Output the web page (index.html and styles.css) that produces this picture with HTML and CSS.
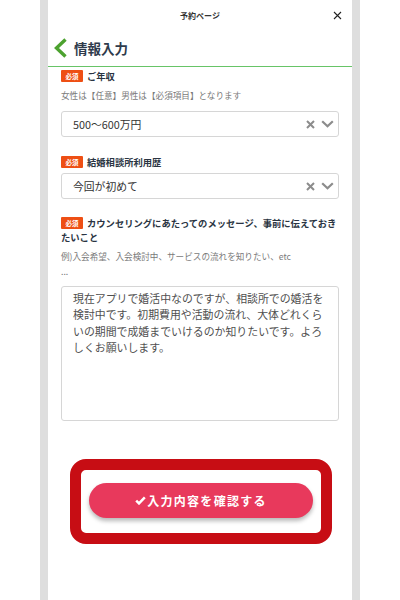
FILE: index.html
```html
<!DOCTYPE html>
<html lang="ja">
<head>
<meta charset="utf-8">
<title>予約ページ</title>
<link rel="stylesheet" href="styles.css">
</head>
<body>
<div class="frame">
  <div class="panel">
    <header class="topbar">
      <span></span>
      <span class="topbar-title">予約ページ</span>
      <span class="close">
        <svg width="9" height="9" viewBox="0 0 9 9"><path d="M1 1L8 8M8 1L1 8" stroke="#222" stroke-width="1.1" fill="none"/></svg>
      </span>
    </header>
    <div class="titlebar">
      <svg class="back" width="14" height="20" viewBox="0 0 14 20"><path d="M12.5 1.5L3.5 10L12.5 18.5" stroke="#4ca22f" stroke-width="3.4" fill="none"/></svg>
      <h1 class="title">情報入力</h1>
    </div>
    <main class="form">
      <div class="label l1"><span class="badge">必須</span>ご年収</div>
      <p class="note n1">女性は【任意】男性は【必須項目】となります</p>
      <div class="select s1">
        <span class="select-value">500〜600万円</span>
        <span class="select-icons">
          <svg width="9" height="9" viewBox="0 0 9 9"><path d="M1 1L8 8M8 1L1 8" stroke="#8c8c8c" stroke-width="2" fill="none"/></svg>
          <svg width="13" height="8" viewBox="0 0 13 8"><path d="M1.2 1.2L6.5 6.3L11.8 1.2" stroke="#8c8c8c" stroke-width="2.2" fill="none"/></svg>
        </span>
      </div>
      <div class="label l2"><span class="badge">必須</span>結婚相談所利用歴</div>
      <div class="select s2">
        <span class="select-value">今回が初めて</span>
        <span class="select-icons">
          <svg width="9" height="9" viewBox="0 0 9 9"><path d="M1 1L8 8M8 1L1 8" stroke="#8c8c8c" stroke-width="2" fill="none"/></svg>
          <svg width="13" height="8" viewBox="0 0 13 8"><path d="M1.2 1.2L6.5 6.3L11.8 1.2" stroke="#8c8c8c" stroke-width="2.2" fill="none"/></svg>
        </span>
      </div>
      <div class="label l3"><span class="badge">必須</span><span>カウンセリングにあたってのメッセージ、事前に伝えておき</span><br><span>たいこと</span></div>
      <p class="note n3">例)入会希望、入会検討中、サービスの流れを知りたい、etc<br>...</p>
      <div class="textarea">現在アプリで婚活中なのですが、相談所での婚活を検討中です。初期費用や活動の流れ、大体どれくらいの期間で成婚までいけるのか知りたいです。よろしくお願いします。</div>
      <div class="highlight">
        <button class="submit" type="button"><svg class="check" width="11" height="9" viewBox="0 0 11 9"><path d="M1.2 4.6L4 7.4L9.8 1.3" stroke="#fff" stroke-width="2.5" fill="none"/></svg>入力内容を確認する</button>
      </div>
    </main>
  </div>
</div>
</body>
</html>
```
FILE: styles.css
```css
* { box-sizing: border-box; }
html, body { margin: 0; padding: 0; background: #fff; }
body {
  font-family: "Noto Sans CJK JP", "Noto Sans", sans-serif;
  color: #2b3542;
}
.frame {
  margin: 0 40px;
  padding: 0 8px;
  height: 600px;
  background: #dedede;
}
.panel {
  background: #fff;
  height: 600px;
  display: flex;
  flex-direction: column;
}
.topbar {
  height: 30px;
  display: grid;
  grid-template-columns: 1fr auto 1fr;
  align-items: center;
}
.topbar-title {
  font-size: 8px;
  font-weight: 700;
  color: #333;
}
.close {
  justify-self: end;
  margin-right: 10px;
  display: flex;
}
.titlebar {
  height: 37px;
  display: flex;
  align-items: center;
  padding-left: 5px;
  gap: 7px;
  border-bottom: 1.5px solid #67c467;
}
.back { display: block; }
.title {
  margin: 0;
  font-size: 13.5px;
  font-weight: 700;
  color: #2f3b4c;
  line-height: 20px;
}
.form {
  display: flex;
  flex-direction: column;
  padding: 0 13px;
}
.label {
  font-size: 9.3px;
  font-weight: 700;
  line-height: 14.5px;
  color: #2a3442;
}
.badge {
  float: left;
  margin-top: 1px;
  width: 22px;
  height: 12px;
  line-height: 12px;
  background: #ee4f14;
  color: #fff;
  font-size: 6.5px;
  font-weight: 700;
  text-align: center;
  border-radius: 1px;
  margin-right: 4px;
}
.l1 { margin-top: 2px; }
.l2 { margin-top: 17.5px; }
.l3 { margin-top: 16.5px; }
.note {
  margin: 0;
  font-size: 8.6px;
  line-height: 15px;
  color: #7a7a7a;
}
.n1 { margin-top: 4.5px; }
.n3 { margin-top: 4.5px; }
.select {
  height: 26px;
  border: 1px solid #d6d6d6;
  border-radius: 3px;
  display: flex;
  align-items: center;
  justify-content: space-between;
  padding: 0 4px 0 11px;
}
.s1 { margin-top: 8px; }
.s2 { margin-top: 4px; }
.select-value {
  font-size: 10.8px;
  color: #333;
}
.select-icons {
  display: flex;
  align-items: center;
  gap: 6px;
}
.select-icons svg { display: block; }
.textarea {
  margin-top: 7px;
  height: 135px;
  border: 1px solid #d6d6d6;
  border-radius: 3px;
  padding: 3px 11px 0 11px;
  font-size: 10.9px;
  line-height: 16.3px;
  color: #4f4f4f;
}
.highlight {
  margin: 38px 7px 0 9px;
  height: 85px;
  border: 11px solid #c70d14;
  border-radius: 16px;
  display: flex;
  justify-content: center;
  align-items: flex-start;
  padding-top: 13px;
}
.submit {
  width: 224px;
  height: 35px;
  border: none;
  border-radius: 18px;
  background: #e8395c;
  color: #fff;
  font-family: "Noto Sans CJK JP", "Noto Sans", sans-serif;
  font-size: 12px;
  font-weight: 700;
  letter-spacing: 1.3px;
  box-shadow: 0 3px 4px rgba(0,0,0,0.28);
  display: flex;
  align-items: center;
  justify-content: center;
  padding: 0;
}
.check { display: block; margin-right: 1px; }
```
